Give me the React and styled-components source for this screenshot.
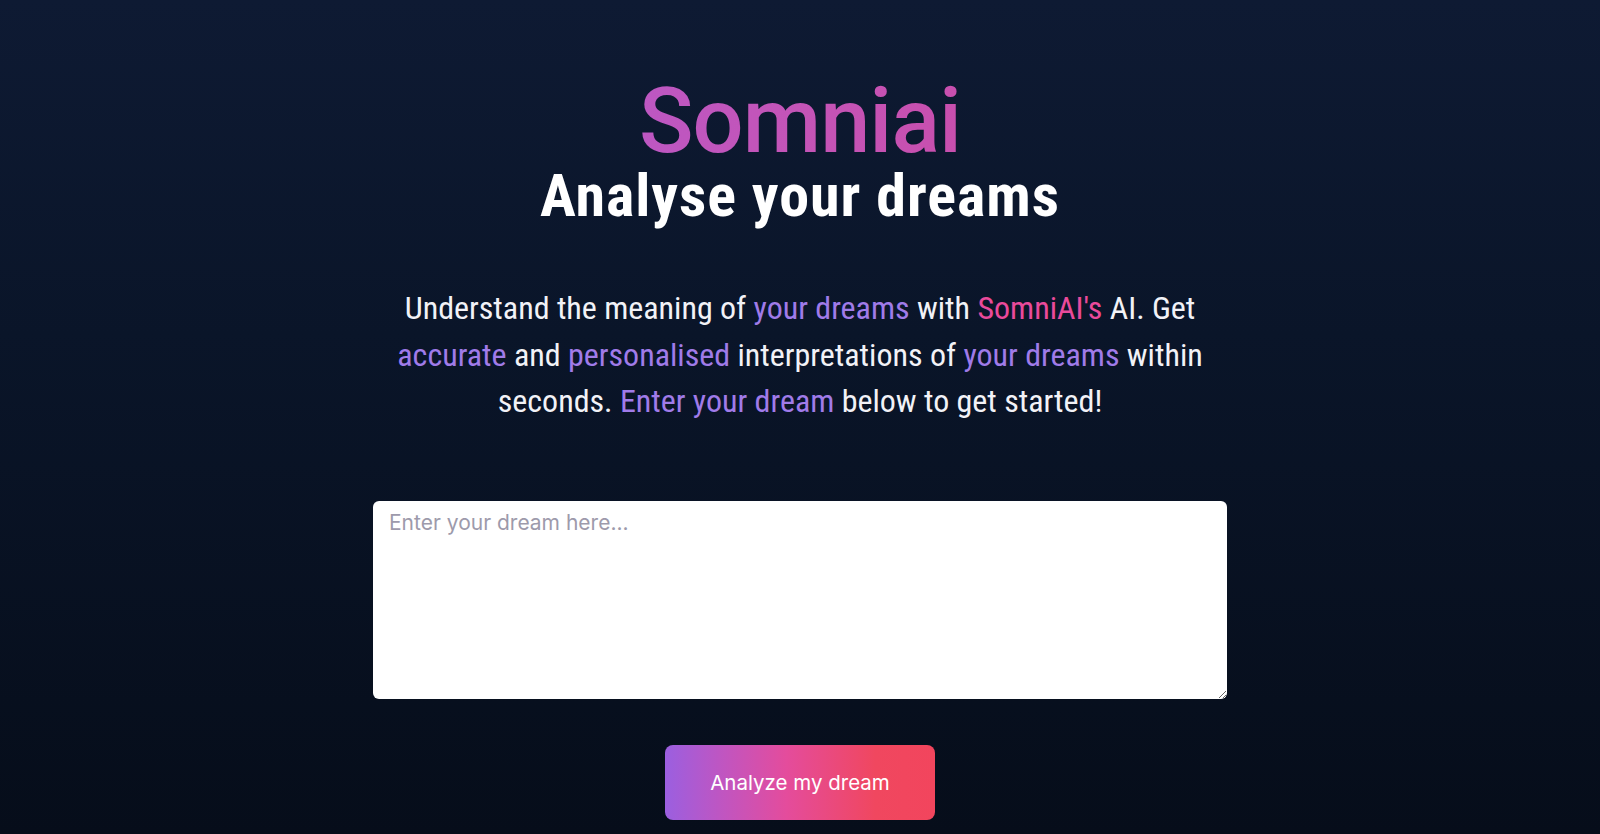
import React from "react";
import styled, { createGlobalStyle } from "styled-components";

const GlobalStyle = createGlobalStyle`
  html, body { margin: 0; padding: 0; }
  body {
    background: #060d1a;
    font-family: Roboto, "Liberation Sans", sans-serif;
  }
  * { box-sizing: border-box; }
`;

const Page = styled.main`
  min-height: 834px;
  background: linear-gradient(180deg, #0e1a33 0%, #0a1529 40%, #060d1a 100%);
  display: flex;
  flex-direction: column;
  align-items: center;
  padding-top: 79px;
`;

const Header = styled.header`
  display: flex;
  flex-direction: column;
  align-items: center;
`;

const Brand = styled.h1`
  margin: 0;
  font-family: Roboto, "Liberation Sans", sans-serif;
  font-size: 90px;
  font-weight: 500;
  line-height: 86px;
  letter-spacing: -0.01em;
  background: linear-gradient(90deg, #bd57c2 0%, #c454b7 50%, #c84fae 100%);
  -webkit-background-clip: text;
  background-clip: text;
  color: transparent;
`;

const Subtitle = styled.h2`
  margin: 0;
  font-family: Roboto, "Liberation Sans", sans-serif;
  font-stretch: 87.5%;
  font-size: 60px;
  font-weight: 700;
  line-height: 62px;
  letter-spacing: 1px;
  color: #ffffff;
`;

const Intro = styled.p`
  margin: 58px 0 0;
  max-width: 820px;
  text-align: center;
  font-family: Roboto, "Liberation Sans", sans-serif;
  font-stretch: 75%;
  font-size: 32px;
  font-weight: 380;
  line-height: 46.5px;
  color: #f2f2f7;
`;

const Accent = styled.span`
  color: ${(p) => (p.$tone === "pink" ? "#ea4a9b" : "#a07be9")};
`;

const Form = styled.form`
  margin-top: 76px;
  display: flex;
  flex-direction: column;
  align-items: center;
  gap: 46px;
`;

const DreamInput = styled.textarea`
  width: 854px;
  height: 198px;
  border: none;
  border-radius: 6px;
  padding: 9px 16px;
  background: #ffffff;
  font-family: Inter, sans-serif;
  font-size: 21px;
  color: #1f2937;
  resize: vertical;
  outline: none;
  &::placeholder { color: #9d9aab; }
`;

const AnalyzeButton = styled.button`
  width: 270px;
  height: 75px;
  border: none;
  border-radius: 8px;
  background: linear-gradient(90deg, #9b5fe0 0%, #c155c0 22%, #e44c9c 45%, #f0475f 78%, #f2455d 100%);
  color: #ffffff;
  font-family: Inter, sans-serif;
  font-size: 20.5px;
  cursor: pointer;
`;

export default function App() {
  return (
    <>
      <GlobalStyle />
      <Page>
        <Header>
          <Brand>Somniai</Brand>
          <Subtitle>Analyse your dreams</Subtitle>
        </Header>
        <Intro>
          Understand the meaning of <Accent>your dreams</Accent> with{" "}
          <Accent $tone="pink">SomniAI's</Accent> AI. Get{" "}
          <Accent>accurate</Accent> and <Accent>personalised</Accent>{" "}
          interpretations of <Accent>your dreams</Accent> within seconds.{" "}
          <Accent>Enter your dream</Accent> below to get started!
        </Intro>
        <Form onSubmit={(e) => e.preventDefault()}>
          <DreamInput placeholder="Enter your dream here..." />
          <AnalyzeButton type="submit">Analyze my dream</AnalyzeButton>
        </Form>
      </Page>
    </>
  );
}
